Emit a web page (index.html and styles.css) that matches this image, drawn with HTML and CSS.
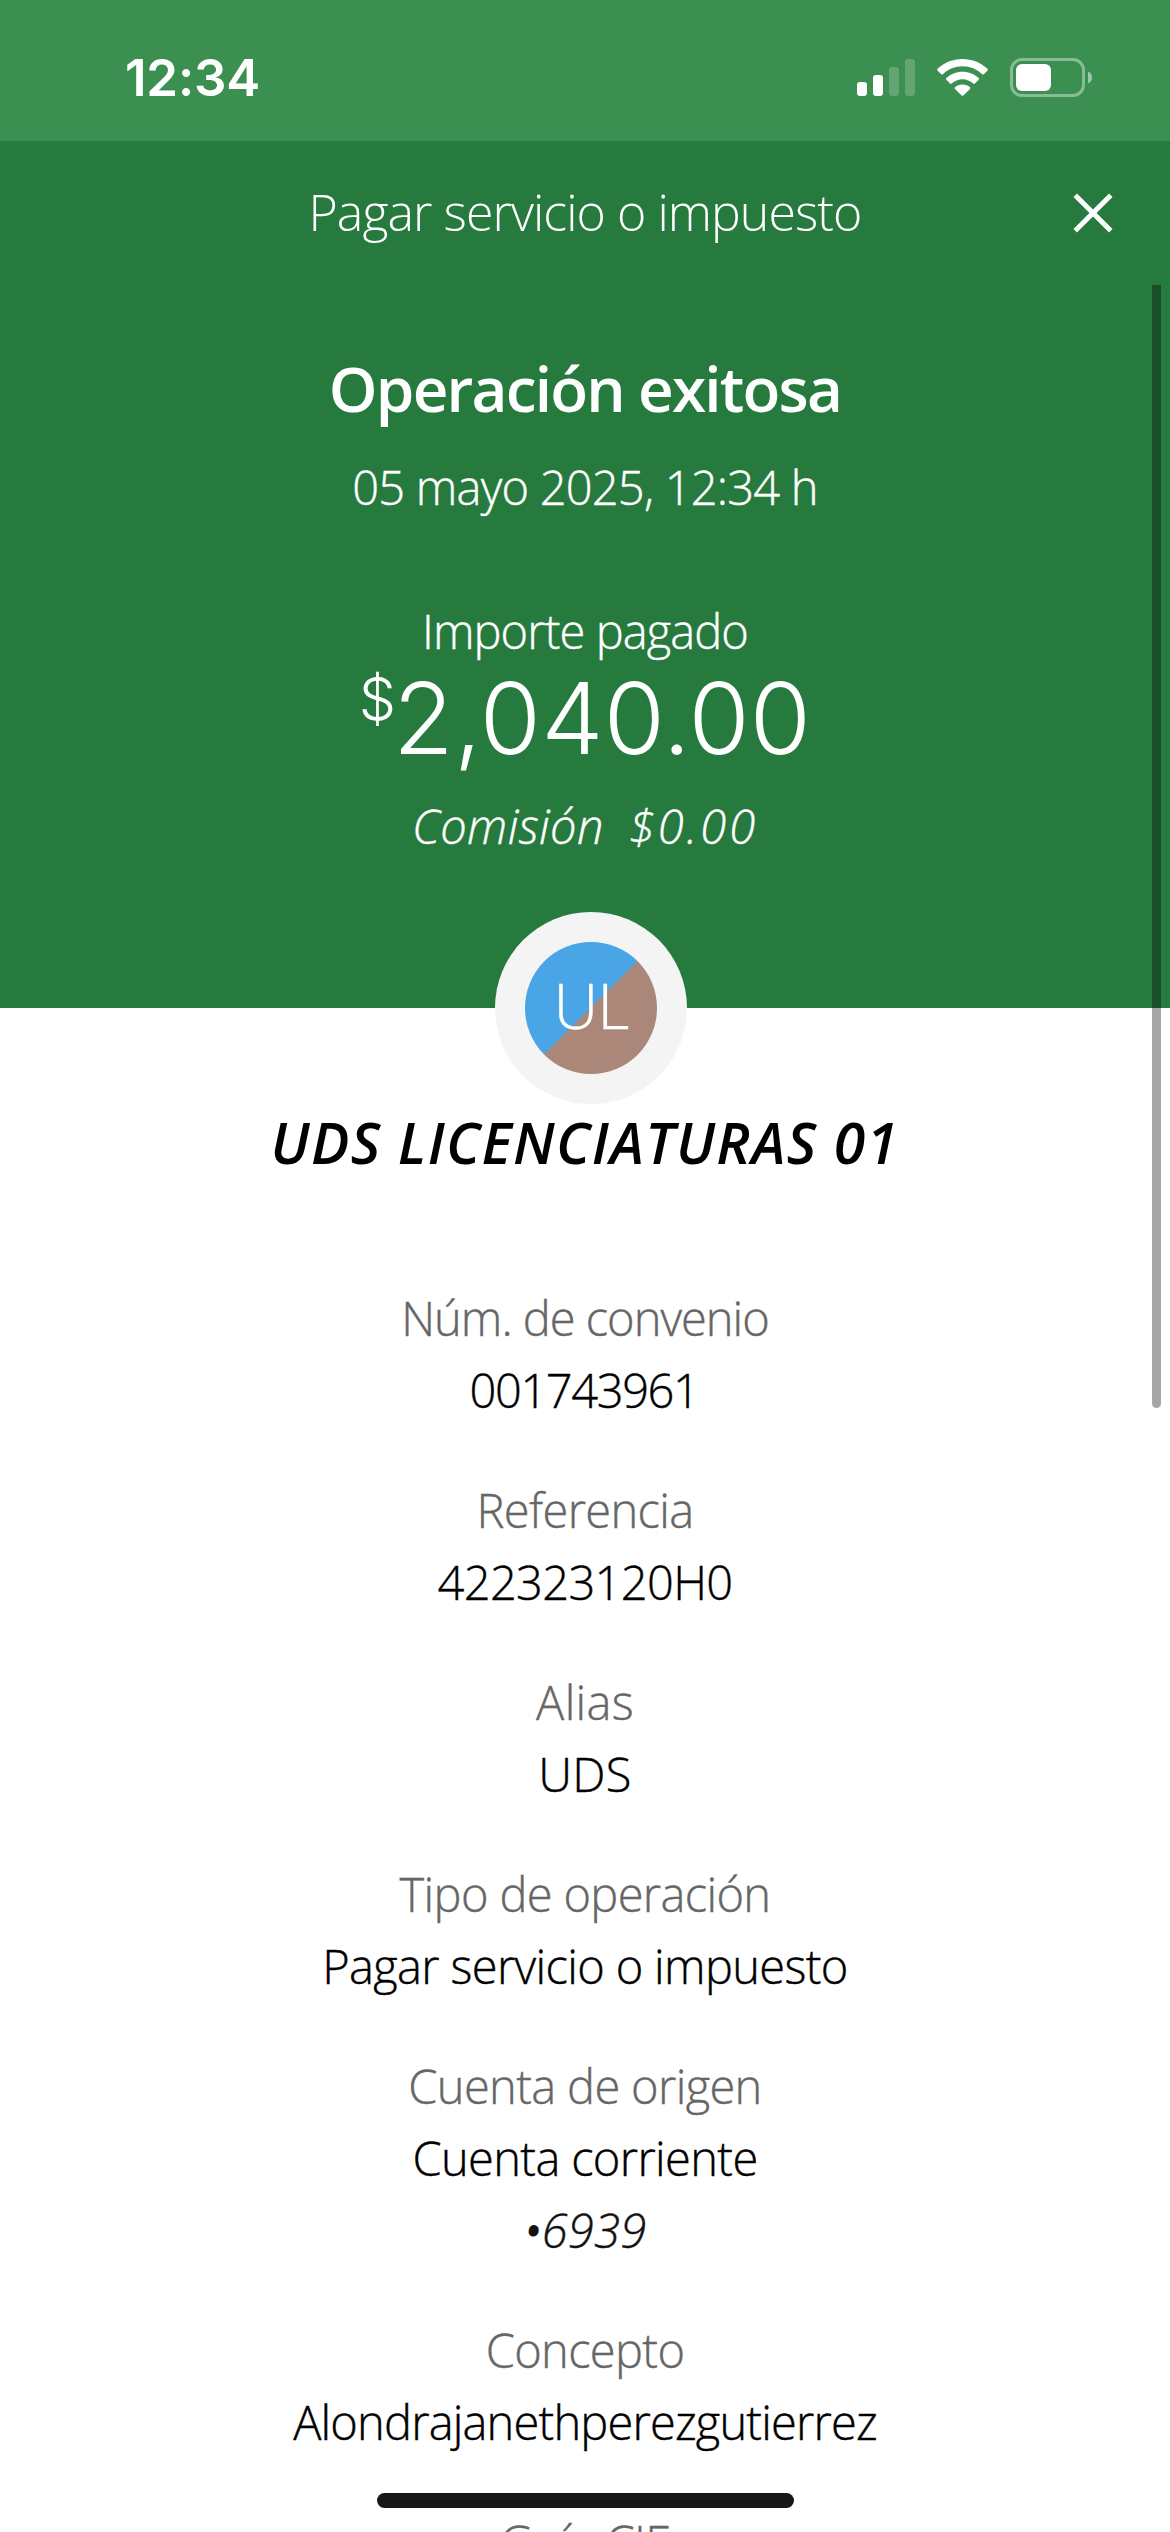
FILE: index.html
```html
<!DOCTYPE html>
<html lang="es">
<head>
<meta charset="utf-8">
<title>Pagar servicio o impuesto</title>
<link rel="stylesheet" href="styles.css">
</head>
<body>
<div class="screen">
  <div class="status">
    <span class="clock">12:34</span>
    <div class="indicators">
      <svg class="signal" width="58" height="37" viewBox="0 0 58 37" fill="#fff">
        <rect x="0" y="23" width="10" height="14" rx="3"/>
        <rect x="16" y="16" width="10" height="21" rx="3"/>
        <rect x="32" y="8" width="10" height="29" rx="3" opacity=".2"/>
        <rect x="48" y="0" width="10" height="37" rx="3" opacity=".2"/>
      </svg>
      <svg class="wifi" width="51" height="37" viewBox="0 0 51 37" fill="#fff">
        <path d="M25.5 0C35.200 0 44 3.700 50.500 9.800Q51.300 10.600 50.500 11.400L46.800 15.200Q46 16 45.200 15.200C39.900 10.300 33 7.300 25.500 7.300S11.100 10.300 5.800 15.200Q5 16 4.200 15.200L.5 11.400Q-.3 10.600 .5 9.800C7 3.700 15.800 0 25.500 0Z"/>
        <path d="M25.500 12.800C31.800 12.800 37.500 15.200 41.700 19.100Q42.500 19.900 41.700 20.700L37.900 24.500Q37.100 25.300 36.300 24.500C33.400 21.900 29.600 20.300 25.500 20.300S17.600 21.900 14.700 24.500Q13.900 25.300 13.100 24.500L9.300 20.700Q8.500 19.900 9.300 19.100C13.500 15.200 19.200 12.800 25.500 12.800Z"/>
        <path d="M25.500 25.600C28.400 25.600 31 26.600 33 28.300Q33.800 29.100 33 29.900L26.300 36.600Q25.500 37.400 24.700 36.600L18 29.900Q17.200 29.100 18 28.300C20 26.600 22.600 25.600 25.500 25.600Z"/>
      </svg>
      <svg class="battery" width="82" height="39" viewBox="0 0 82 39">
        <rect x="1.500" y="1.500" width="72" height="36" rx="10.500" fill="none" stroke="#fff" stroke-width="3" opacity=".4"/>
        <rect x="6" y="6" width="35" height="27" rx="6" fill="#fff"/>
        <path d="M78 13.500C80.500 14.500 82 16.800 82 19.500S80.500 24.500 78 25.500Z" fill="#fff" opacity=".5"/>
      </svg>
    </div>
  </div>

  <header class="titlebar">
    <h1 class="title">Pagar servicio o impuesto</h1>
    <svg class="close" width="40" height="40" viewBox="0 0 40 40" stroke="#fff" stroke-width="5">
      <path d="M2.200 2.200 37.800 37.800M37.800 2.200 2.200 37.800"/>
    </svg>
  </header>

  <section class="hero">
    <h2 class="result">Operación exitosa</h2>
    <p class="date">05 mayo 2025, 12:34 h</p>
    <p class="caption">Importe pagado</p>
    <p class="amount"><span class="currency">$</span><span class="figure">2,040.00</span></p>
    <p class="fee"><span class="fee-label">Comisión</span><span class="fee-value">$0.00</span></p>
  </section>

  <main class="receipt">
    <div class="avatar"><div class="initials">UL</div></div>
    <h2 class="payee">UDS LICENCIATURAS 01</h2>
    <dl class="details">
      <div><dt class="snug">Núm. de convenio</dt><dd class="digits">001743961</dd></div>
      <div><dt>Referencia</dt><dd>422323120H0</dd></div>
      <div><dt class="plain">Alias</dt><dd class="plain">UDS</dd></div>
      <div><dt>Tipo de operación</dt><dd>Pagar servicio o impuesto</dd></div>
      <div><dt>Cuenta de origen</dt><dd>Cuenta corriente</dd><dd class="masked"><span class="dot">•</span>6939</dd></div>
      <div><dt>Concepto</dt><dd class="concept">Alondrajanethperezgutierrez</dd></div>
      <div><dt>Guía CIE</dt></div>
    </dl>
  </main>

  <div class="scrollbar"></div>
  <div class="home-indicator"></div>
</div>
</body>
</html>
```
FILE: styles.css
```css
* { box-sizing: border-box; }
body, h1, h2, p, dl, dd { margin: 0; }
html, body { height: 100%; overflow: hidden; }

.screen {
  position: relative;
  width: 1170px;
  height: 2532px;
  overflow: hidden;
  background: #fff;
  color: #000;
  font: 300 47px/64px "Open Sans", sans-serif;
  text-align: center;
}

/* Status bar */
.status {
  display: flex;
  justify-content: space-between;
  align-items: center;
  height: 141px;
  padding: 14px 78px 0 125px;
  background: #3b8f50;
  color: #fff;
}
.clock { font: 600 51px/62px Inter, sans-serif; letter-spacing: -.2px; }
.indicators { display: flex; align-items: center; }
.wifi { margin-left: 22px; }
.battery { margin-left: 22px; }

/* Title bar */
.titlebar {
  display: grid;
  grid-template-columns: 98px 1fr 98px;
  align-items: center;
  height: 144px;
  padding-bottom: 2px;
  background: #277a3e;
  color: #fff;
}
.title {
  grid-column: 2;
  font-size: 50px;
  font-weight: 300;
  line-height: 68px;
  letter-spacing: -.94px;
}
.close { margin: 1px 0 0 1px; }

/* Payment summary */
.hero {
  height: 723px;
  padding-top: 61px;
  background: #277a3e;
  color: #fff;
}
.result { font-size: 62px; font-weight: 600; line-height: 84px; letter-spacing: -1.8px; }
.date { margin-top: 25px; letter-spacing: -.77px; -webkit-text-stroke: .4px; }
.caption { margin-top: 80px; letter-spacing: -.9px; -webkit-text-stroke: .4px; }
.amount {
  display: flex;
  justify-content: center;
  align-items: baseline;
  margin-top: 5px;
  height: 100px;
  font: 300 99px/100px Inter, sans-serif;
}
.currency { font-size: 59px; line-height: 60px; margin-right: -3px; transform: translateY(-34px); }
.figure { letter-spacing: .3px; }
.fee {
  display: flex;
  justify-content: center;
  gap: 25px;
  margin-top: 26px;
  font-style: italic;
  -webkit-text-stroke: .4px;
}
.fee-label { letter-spacing: .4px; }
.fee-value { letter-spacing: 3px; }

/* Payee */
.avatar {
  display: flex;
  justify-content: center;
  align-items: center;
  width: 192px;
  height: 192px;
  margin: -96px 0 0 495px;
  border-radius: 50%;
  background: #f4f4f4;
}
.initials {
  width: 132px;
  height: 132px;
  border-radius: 50%;
  background: linear-gradient(135deg, #49a5e6 50%, #aa8778 50%);
  color: #fff;
  font-size: 62px;
  line-height: 127px;
  letter-spacing: -.6px;
  -webkit-text-stroke: .4px;
}
.payee {
  font-size: 57px;
  font-weight: 600;
  font-style: italic;
  line-height: 76px;
  letter-spacing: 1.4px;
}

/* Receipt details */
.details {
  display: flex;
  flex-direction: column;
  gap: 48px;
  padding-top: 102px;
  line-height: 72px;
  letter-spacing: -.65px;
  -webkit-text-stroke: .4px;
}
.details dt { color: #666; }
.details .snug { letter-spacing: -1px; }
.details .digits { letter-spacing: -1.4px; padding-right: 2px; }
.details .plain { letter-spacing: .3px; }
.details .masked { letter-spacing: .3px; color: #121212; font-style: italic; }
.details .dot { -webkit-text-stroke: 3px; }
.details .concept { letter-spacing: -.82px; }

/* Overlays */
.scrollbar {
  position: absolute;
  top: 285px;
  right: 9px;
  width: 9px;
  height: 1123px;
  border-radius: 0 0 5px 5px;
  background: rgba(0, 0, 0, .35);
}
.home-indicator {
  position: absolute;
  left: 377px;
  bottom: 24px;
  width: 417px;
  height: 15px;
  border-radius: 8px;
  background: #171717;
}
```
